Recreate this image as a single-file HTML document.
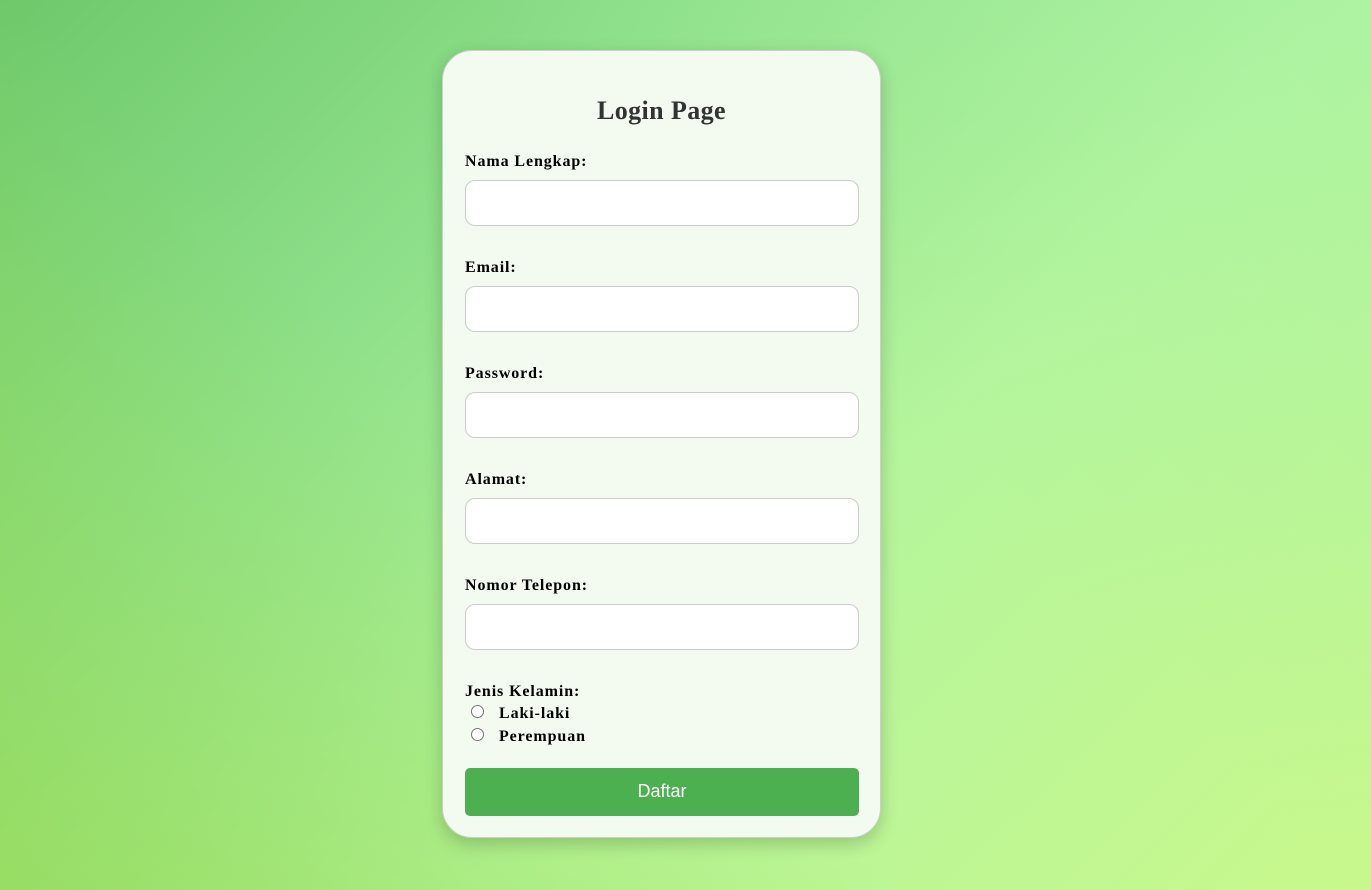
<!DOCTYPE html>
<html><head><style>
html,body{margin:0;height:890px;width:1371px;overflow:hidden}
body{background:linear-gradient(135deg,#6ec96b 0%,#8fe08a 30%,#b5f59c 60%,#c8f88c 100%);font-family:"Liberation Serif",serif;position:relative}
.bg2{position:absolute;inset:0;background:linear-gradient(45deg,rgba(150,215,70,0.6) 0%,rgba(150,215,70,0) 40%,rgba(160,240,170,0) 60%,rgba(160,240,170,0.4) 100%)}
.card{position:absolute;left:442px;top:50px;width:437px;height:786px;background:#f3fbf1;border:1px solid #c8d0c8;border-radius:30px;box-shadow:0 6px 18px rgba(0,0,0,0.2)}
h1{position:absolute;top:94px;left:0;width:100%;text-align:center;margin:0;font-size:26px;letter-spacing:0.4px;line-height:34px;color:#333;font-weight:bold}
.lbl{position:absolute;left:22px;font-size:16px;letter-spacing:0.9px;font-weight:bold;color:#000;line-height:20px}
.in{position:absolute;left:22px;width:394px;height:46px;box-sizing:border-box;background:#fff;border:1px solid #ccc;border-radius:10px}
.r{position:absolute;left:28px;width:13px;height:13px;box-sizing:border-box;border:1px solid #767676;border-radius:50%;background:#fff}
.btn{position:absolute;left:22px;top:717px;width:394px;height:48px;background:#4caf50;border-radius:5px;color:#fff;font:18px "Liberation Sans",sans-serif;text-align:center;line-height:46px}
</style></head><body><div class="bg2"></div>
<div class="card">
<h1 style="top:43px">Login Page</h1>
<div class="lbl" style="top:101px">Nama Lengkap:</div><div class="in" style="top:129px"></div>
<div class="lbl" style="top:207px">Email:</div><div class="in" style="top:235px"></div>
<div class="lbl" style="top:313px">Password:</div><div class="in" style="top:341px"></div>
<div class="lbl" style="top:419px">Alamat:</div><div class="in" style="top:447px"></div>
<div class="lbl" style="top:525px">Nomor Telepon:</div><div class="in" style="top:553px"></div>
<div class="lbl" style="top:631px">Jenis Kelamin:</div>
<div class="r" style="top:654px"></div><div class="lbl" style="left:56px;top:653px">Laki-laki</div>
<div class="r" style="top:677px"></div><div class="lbl" style="left:56px;top:676px">Perempuan</div>
<div class="btn">Daftar</div>
</div>
</body></html>
